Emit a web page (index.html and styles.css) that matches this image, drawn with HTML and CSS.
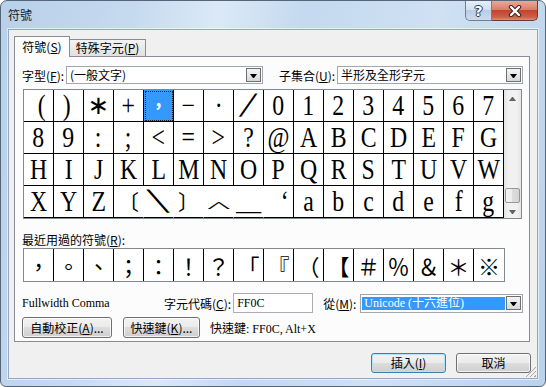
FILE: index.html
```html
<!DOCTYPE html>
<html lang="zh-Hant">
<head>
    <meta charset="UTF-8">
    <title>符號</title>
    <link rel="stylesheet" href="styles.css">
</head>
<body>
    <div class="window">
        <div class="titlebar">
            <span class="title">符號</span>
            <div class="caption">
                <span class="cap-btn help">?</span>
                <span class="cap-btn close">
                    <svg width="14" height="12" viewBox="0 0 14 12">
                        <path d="M3 2 L11 10 M11 2 L3 10" stroke="#3a2420" stroke-width="4.4" stroke-linecap="round"/>
                        <path d="M3 2 L11 10 M11 2 L3 10" stroke="#fff" stroke-width="2.4" stroke-linecap="round"/>
                    </svg>
                </span>
            </div>
        </div>
        <div class="client">
            <div class="tabs">
                <span class="tab active">符號(<u>S</u>)</span>
                <span class="tab">特殊字元(<u>P</u>)</span>
            </div>
            <div class="panel">
                <div class="font-row">
                    <span class="font-label">字型(<u>F</u>):</span>
                    <div class="combo font-combo"><span class="combo-text">(一般文字)</span><span class="drop"></span></div>
                    <span class="subset-label">子集合(<u>U</u>):</span>
                    <div class="combo subset-combo"><span class="combo-text">半形及全形字元</span><span class="drop"></span></div>
                </div>

                <div class="charmap">
                    <div class="cells">
                        <div class="cell"><span class="g paren-l">(</span></div>
                        <div class="cell"><span class="g paren-r">)</span></div>
                        <div class="cell"><span class="ast">∗</span></div>
                        <div class="cell"><span class="g">+</span></div>
                        <div class="cell selected"><span class="cjk">，</span></div>
                        <div class="cell"><span class="g">−</span></div>
                        <div class="cell"><span class="g">·</span></div>
                        <div class="cell"><span class="line">╱</span></div>
                        <div class="cell"><span class="g">0</span></div>
                        <div class="cell"><span class="g">1</span></div>
                        <div class="cell"><span class="g">2</span></div>
                        <div class="cell"><span class="g">3</span></div>
                        <div class="cell"><span class="g">4</span></div>
                        <div class="cell"><span class="g">5</span></div>
                        <div class="cell"><span class="g">6</span></div>
                        <div class="cell"><span class="g">7</span></div>

                        <div class="cell"><span class="g">8</span></div>
                        <div class="cell"><span class="g">9</span></div>
                        <div class="cell"><span class="g">:</span></div>
                        <div class="cell"><span class="g">;</span></div>
                        <div class="cell"><span class="g">&lt;</span></div>
                        <div class="cell"><span class="g">=</span></div>
                        <div class="cell"><span class="g">&gt;</span></div>
                        <div class="cell"><span class="g">?</span></div>
                        <div class="cell"><span class="g">@</span></div>
                        <div class="cell"><span class="g">A</span></div>
                        <div class="cell"><span class="g">B</span></div>
                        <div class="cell"><span class="g">C</span></div>
                        <div class="cell"><span class="g">D</span></div>
                        <div class="cell"><span class="g">E</span></div>
                        <div class="cell"><span class="g">F</span></div>
                        <div class="cell"><span class="g">G</span></div>

                        <div class="cell"><span class="g">H</span></div>
                        <div class="cell"><span class="g">I</span></div>
                        <div class="cell"><span class="g">J</span></div>
                        <div class="cell"><span class="g">K</span></div>
                        <div class="cell"><span class="g">L</span></div>
                        <div class="cell"><span class="g">M</span></div>
                        <div class="cell"><span class="g">N</span></div>
                        <div class="cell"><span class="g">O</span></div>
                        <div class="cell"><span class="g">P</span></div>
                        <div class="cell"><span class="g">Q</span></div>
                        <div class="cell"><span class="g">R</span></div>
                        <div class="cell"><span class="g">S</span></div>
                        <div class="cell"><span class="g">T</span></div>
                        <div class="cell"><span class="g">U</span></div>
                        <div class="cell"><span class="g">V</span></div>
                        <div class="cell"><span class="g">W</span></div>

                        <div class="cell"><span class="g">X</span></div>
                        <div class="cell"><span class="g">Y</span></div>
                        <div class="cell"><span class="g">Z</span></div>
                        <div class="cell open"><span class="cjk bracket">〔</span></div>
                        <div class="cell open"><span class="line back">╲</span></div>
                        <div class="cell open"><span class="cjk bracket">〕</span></div>
                        <div class="cell open"><span class="caret">^</span></div>
                        <div class="cell open"><span class="g under">_</span></div>
                        <div class="cell quote"><span class="g">‘</span></div>
                        <div class="cell"><span class="g">a</span></div>
                        <div class="cell"><span class="g">b</span></div>
                        <div class="cell"><span class="g">c</span></div>
                        <div class="cell"><span class="g">d</span></div>
                        <div class="cell"><span class="g">e</span></div>
                        <div class="cell"><span class="g">f</span></div>
                        <div class="cell"><span class="g">g</span></div>
                    </div>
                    <div class="scrollbar">
                        <span class="arrow up"></span>
                        <div class="track"><span class="thumb"></span></div>
                        <span class="arrow down"></span>
                    </div>
                </div>

                <div class="recent-label">最近用過的符號(<u>R</u>):</div>
                <div class="recent">
                    <span class="rcell">，</span>
                    <span class="rcell">。</span>
                    <span class="rcell">、</span>
                    <span class="rcell">；</span>
                    <span class="rcell">：</span>
                    <span class="rcell">！</span>
                    <span class="rcell">？</span>
                    <span class="rcell">「</span>
                    <span class="rcell">『</span>
                    <span class="rcell">（</span>
                    <span class="rcell">【</span>
                    <span class="rcell">＃</span>
                    <span class="rcell">％</span>
                    <span class="rcell">＆</span>
                    <span class="rcell">＊</span>
                    <span class="rcell">※</span>
                </div>

                <div class="info-row">
                    <span class="char-name">Fullwidth Comma</span>
                    <span class="code-label">字元代碼(<u>C</u>):</span>
                    <span class="textbox">FF0C</span>
                    <span class="from-label">從(<u>M</u>):</span>
                    <div class="combo from-combo"><span class="combo-sel">Unicode (十六進位)</span><span class="drop"></span></div>
                </div>

                <div class="btn-row">
                    <button class="btn autocorrect">自動校正(<u>A</u>)...</button>
                    <button class="btn shortcut">快速鍵(<u>K</u>)...</button>
                    <span class="shortcut-text">快速鍵: FF0C, Alt+X</span>
                </div>
            </div>

            <div class="footer">
                <button class="btn dlg default">插入(<u>I</u>)</button>
                <button class="btn dlg">取消</button>
            </div>
            <span class="grip"></span>
        </div>
    </div>
</body>
</html>
```

FILE: styles.css
```css
body {
    margin: 0;
    font-family: "Liberation Serif", "Noto Sans CJK TC", serif;
    font-size: 12px;
    color: #000;
}
u { text-decoration: underline; text-underline-offset: 1px; }

.window {
    width: 546px;
    height: 387px;
    box-sizing: border-box;
    border: 1px solid #55667a;
    border-radius: 7px 7px 6px 6px;
    background: linear-gradient(100deg, #b8d0ea 0%, #c6daef 22%, #dbe9f7 36%, #c4d9ef 50%, #cfe1f3 72%, #bad2eb 100%);
    padding: 0 7px 7px;
    display: flex;
    flex-direction: column;
    overflow: hidden;
}

/* title bar */
.titlebar {
    height: 28px;
    flex-shrink: 0;
    display: flex;
    justify-content: space-between;
    align-items: flex-start;
}
.title {
    font-family: "Noto Sans CJK TC", sans-serif;
    padding-top: 5px;
    line-height: 18px;
    color: #1a1a1a;
}
.caption { display: flex; }
.cap-btn {
    height: 20px;
    box-sizing: border-box;
    display: flex;
    align-items: center;
    justify-content: center;
}
.help {
    width: 27px;
    border: 1px solid #6e7f95;
    border-top: none;
    border-radius: 0 0 0 5px;
    background: linear-gradient(#e6eef8, #d2e0ef 45%, #b9cce2 50%, #cddcec);
    font: bold 14px "DejaVu Sans", sans-serif;
    color: #fff;
    text-shadow: 0 0 1px #2a3c55, 1px 0 0 #2a3c55, -1px 0 0 #2a3c55, 0 1px 0 #2a3c55, 0 -1px 0 #2a3c55;
}
.close {
    width: 46px;
    border: 1px solid #6b3b33;
    border-top: none;
    border-left: none;
    border-radius: 0 0 5px 0;
    background: linear-gradient(#e9a898, #da8068 45%, #c3432c 50%, #cf5f48 85%, #e08c74);
}

/* client area */
.client {
    flex: 1;
    position: relative;
    background: #f0f0f0;
    border: 1px solid #93a8c1;
    box-shadow: 0 0 0 1px rgba(255, 255, 255, 0.55);
    display: flex;
    flex-direction: column;
}

.tabs {
    display: flex;
    align-items: flex-end;
    height: 20px;
    margin: 6px 0 0 5px;
    position: relative;
    z-index: 1;
}
.tab {
    width: 76px;
    height: 17px;
    box-sizing: border-box;
    border: 1px solid #898c95;
    border-bottom: none;
    border-left: none;
    background: linear-gradient(#f3f3f3, #e9e9e9 50%, #e1e1e1);
    font-family: "Noto Sans CJK TC", "Liberation Serif", sans-serif;
    line-height: 15px;
    text-align: center;
}
.tab.active {
    width: 56px;
    height: 21px;
    margin-bottom: -1px;
    border-left: 1px solid #898c95;
    background: #fcfcfc;
    line-height: 19px;
}

.panel {
    height: 286px;
    box-sizing: border-box;
    margin: 0 7px 0 5px;
    padding: 9px 6px 0 7px;
    border: 1px solid #898c95;
    background: #fcfcfc;
}

/* font / subset row */
.font-row {
    display: flex;
    align-items: center;
    height: 18px;
}
.font-label { width: 44px; }
.subset-label { margin-left: 16px; width: 58px; }
.combo {
    height: 18px;
    box-sizing: border-box;
    border: 1px solid #a2a6ad;
    background: #fff;
    display: flex;
    align-items: center;
}
.font-combo { width: 197px; }
.subset-combo { flex: 1; }
.combo-text {
    flex: 1;
    padding-left: 3px;
    line-height: 16px;
    font-family: "Noto Sans CJK TC", "Liberation Serif", sans-serif;
}
.drop {
    width: 15px;
    height: 14px;
    box-sizing: border-box;
    margin-right: 1px;
    border: 1px solid #6f6f6f;
    background: linear-gradient(#f4f4f4, #e6e6e6 50%, #d7d7d7);
    display: flex;
    align-items: center;
    justify-content: center;
}
.drop::after {
    content: "";
    border-left: 3px solid transparent;
    border-right: 3px solid transparent;
    border-top: 4px solid #000;
    width: 1px;
    margin-top: 1px;
}

/* character map */
.charmap {
    display: flex;
    width: 499px;
    height: 130px;
    box-sizing: border-box;
    margin: 5px 0 0 1px;
    border: 1px solid #828790;
    background: #fff;
}
.cells {
    display: grid;
    grid-template-columns: repeat(16, 30px);
    grid-auto-rows: 32px;
    width: 480px;
}
.cell {
    box-sizing: border-box;
    border-right: 1px solid #000;
    border-bottom: 1px solid #000;
    display: flex;
    justify-content: center;
    align-items: flex-start;
    font: 29px/31px "Liberation Serif", serif;
    overflow: hidden;
}
.cell.open { border-right-color: transparent; }
.cell.quote { justify-content: flex-end; padding-right: 3px; }
.g { display: inline-block; transform: scaleX(0.82); }
.paren-l { transform: translateX(3px) scaleX(0.82); }
.paren-r { transform: translateX(-2px) scaleX(0.82); }
.ast {
    display: inline-block;
    font: 26px/31px "DejaVu Sans", sans-serif;
}
.line {
    display: inline-block;
    font: 20px/31px "DejaVu Sans", sans-serif;
    transform: scaleX(1.35);
}
.line.back { transform: scaleX(1.7); }
.caret {
    display: inline-block;
    font: 20px/31px "Liberation Serif", serif;
    transform: translateY(6px) scale(2.5, 0.75);
}
.under { font-size: 26px; transform: scaleX(1.9); }
.cjk {
    font: 21px/31px "Noto Sans CJK TC", sans-serif;
}
.selected {
    background: #3399ff;
    color: #fff;
    outline: 1px dotted #222;
    outline-offset: -2px;
}
.selected .cjk { font-weight: bold; font-size: 18px; }

.scrollbar {
    width: 17px;
    display: flex;
    flex-direction: column;
    background: linear-gradient(90deg, #e4e4e4, #f1f1f1 25%, #f1f1f1 75%, #e4e4e4);
}
.arrow {
    height: 17px;
    flex-shrink: 0;
    display: flex;
    align-items: center;
    justify-content: center;
}
.arrow::after {
    content: "";
    width: 1px;
    border-left: 3px solid transparent;
    border-right: 3px solid transparent;
}
.arrow.up::after { border-bottom: 4px solid #626262; }
.arrow.down::after { border-top: 4px solid #626262; }
.track { flex: 1; display: flex; flex-direction: column; }
.thumb {
    height: 15px;
    margin: 81px 1px 0;
    box-sizing: border-box;
    border: 1px solid #979797;
    border-radius: 2px;
    background: linear-gradient(90deg, #f4f4f4, #ececec 50%, #dcdcdc 50%, #d4d4d4);
}

/* recently used */
.recent-label {
    margin-top: 14px;
    line-height: 14px;
}
.recent-label, .code-label, .from-label, .font-label, .subset-label, .btn {
    font-family: "Noto Sans CJK TC", "Liberation Serif", sans-serif;
}
.recent {
    display: flex;
    width: 482px;
    height: 34px;
    box-sizing: border-box;
    margin: 1px 0 0 1px;
    border: 1px solid #828790;
    background: #fff;
}
.rcell {
    width: 30px;
    flex-shrink: 0;
    box-sizing: border-box;
    border-right: 1px solid #000;
    text-align: center;
    font: 22px/32px "Noto Sans CJK TC", sans-serif;
}
.rcell:last-child { border-right: none; }

/* info row */
.info-row {
    display: flex;
    align-items: center;
    height: 20px;
    margin-top: 11px;
}
.char-name { width: 142px; font-size: 12px; }
.textbox {
    width: 80px;
    height: 20px;
    box-sizing: border-box;
    margin-left: 2px;
    padding-left: 3px;
    border: 1px solid #abadb3;
    background: #fff;
    line-height: 18px;
}
.from-label { margin-left: 10px; }
.from-combo { flex: 1; height: 19px; margin-left: 4px; }
.combo-sel {
    flex: 1;
    margin: 1px;
    padding-left: 2px;
    background: #3399ff;
    color: #fff;
    line-height: 13px;
    font-family: "Liberation Serif", "Noto Sans CJK TC", serif;
}

/* buttons */
.btn {
    height: 21px;
    box-sizing: border-box;
    padding: 0;
    border: 1px solid #707070;
    border-radius: 3px;
    background: linear-gradient(#f2f2f2, #ebebeb 50%, #dddddd 50%, #cfcfcf);
    box-shadow: inset 0 0 0 1px rgba(255, 255, 255, 0.7);
    font-size: 12px;
    line-height: 18px;
    color: #000;
}
.btn-row {
    display: flex;
    align-items: center;
    margin-top: 4px;
}
.autocorrect { width: 90px; }
.shortcut { width: 77px; margin-left: 11px; }
.shortcut-text { margin-left: 10px; }

.footer {
    display: flex;
    justify-content: flex-end;
    gap: 10px;
    margin: 11px 6px 0 0;
}
.dlg { width: 75px; height: 20px; }
.default {
    border-color: #3c7fb1;
    box-shadow: inset 0 0 0 1px #b4e1f7;
}

.grip {
    position: absolute;
    right: 1px;
    bottom: 1px;
    width: 11px;
    height: 11px;
    background: repeating-linear-gradient(135deg, transparent 0 2px, #a9a9a9 2px 3px);
    clip-path: polygon(100% 0, 100% 100%, 0 100%);
}
```
